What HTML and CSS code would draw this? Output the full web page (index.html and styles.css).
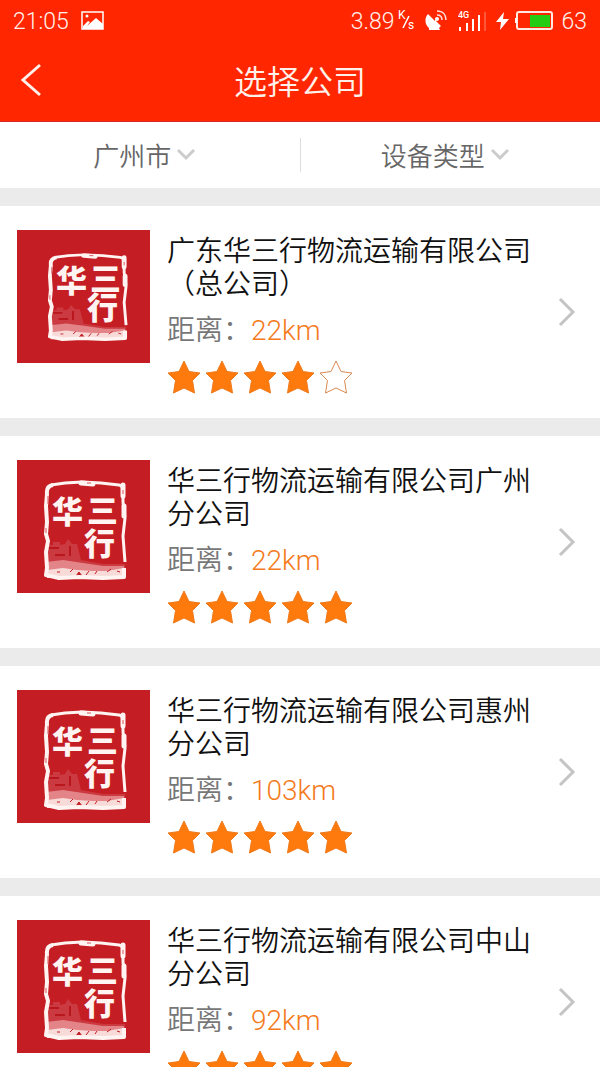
FILE: index.html
```html
<!DOCTYPE html>
<html lang="zh-CN">
  <head>
    <meta charset="UTF-8" />
    <meta name="viewport" content="width=device-width, initial-scale=1.0" />
    <title>选择公司</title>
    <link rel="stylesheet" href="styles.css">
  </head>
  <body>
    <svg class="sprite" aria-hidden="true">
      <symbol id="star" viewBox="0 0 34 34">
        <path d="M17 1 L22 11.500 L33 13 L25.500 20.500 L27.500 33 L17 28 L6.500 33 L8.500 20.500 L1 13 L12 11.500 Z" />
      </symbol>
      <symbol id="down" viewBox="0 0 20 14">
        <path d="M2 2 L10 10 L18 2" />
      </symbol>
      <symbol id="next" viewBox="0 0 18 30">
        <path d="M2 2 L15 15 L2 28" />
      </symbol>

      <!-- seal frame with the skyline -->
      <symbol id="seal" viewBox="0 0 84 100" preserveAspectRatio="none">
        <path d="M4 65 H10 V62 H17 V65 L22 64 L25 59 L29 64 L34 64 L38 80 L60 84 L82 84 V94 H4 Z" fill="#cb3a40" />
        <path d="M6 68 H16 M12 75 H22 M27 66 V76" stroke="#b9161e" stroke-width="2" />
        <path d="M3 82 L20 80 L40 83 L60 86 L81 86 V94 H3 Z" fill="#e28488" />
        <path d="M4 90 L20 88 L34 90 L50 91 L64 91 L81 88 V98 H4 Z" fill="#f8dbd8" />
        <path d="M27 92 l3 -3 M33 96 l3 -4 l3 4 Z M46 91 l-3 4 M52 94 l2 -3 M64 92 l4 -3 M74 91 l3 1 M14 92 h3" stroke="#c51d24" stroke-width="1" fill="#c51d24" />
        <path d="M8 5 L22 3 L39 2 L58 3 L76 5 Q81 6 80 12 L80 22 L82 38 L80 56 L82 82" fill="none" stroke="#fff4f1" stroke-width="3" stroke-linejoin="round" />
        <path d="M80 5 L80 16 M81 26 L81 36 M38 3 L50 4" fill="none" stroke="#fff4f1" stroke-width="5" stroke-linecap="round" />
        <path d="M10 5 Q3 6 4 14 L3 26 L4 42 L3 54 L5 61 L3 72 L4 88 L3 95 L16 98 L36 97 L60 98 L81 97 V88" fill="none" stroke="#fff4f1" stroke-width="4" stroke-linejoin="round" />
        <path d="M5 16 V24 M3 48 V53 M80 10 V14 M44 3 H48" stroke="#d8555a" stroke-width="1" />
      </symbol>
      <symbol id="logo-head" viewBox="0 0 133 133">
        <rect width="133" height="133" fill="#c51d24" />
        <use href="#seal" x="30" y="23" width="81" height="88" />
        <g class="seal-text">
          <text x="39" y="62">华</text>
          <text x="73" y="60">三</text>
          <text x="70" y="89">行</text>
        </g>
      </symbol>
      <symbol id="logo-branch" viewBox="0 0 133 133">
        <rect width="133" height="133" fill="#c51d24" />
        <use href="#seal" x="26" y="20" width="84" height="100" />
        <g class="seal-text">
          <text x="35" y="63">华</text>
          <text x="70" y="62">三</text>
          <text x="67" y="95">行</text>
        </g>
      </symbol>
    </svg>

    <div class="app">
      <header class="header">
        <div class="status">
          <span>21:05</span>
          <svg class="icon-photo" width="24" height="20" viewBox="0 0 24 20" aria-hidden="true">
            <rect x="1" y="1" width="21" height="17" fill="none" stroke="#fff" stroke-width="1.500" />
            <circle cx="6" cy="5" r="1.500" />
            <path d="M2 17 V15 L7 10 L9 11 L6 15 L15 7 L22 13 V18 H2 Z" />
          </svg>
          <div class="status-right">
            <span>3.89</span>
            <svg class="icon-speed" width="18" height="28" viewBox="0 0 18 28" aria-label="K/s">
              <text x="0" y="12">K</text>
              <path d="M11 9 L5 21" stroke="#fff" stroke-width="1.500" />
              <text x="10" y="22">s</text>
            </svg>
            <svg class="icon-dish" width="22" height="22" viewBox="0 0 22 22" aria-hidden="true">
              <path d="M3 4 C-1 8 0 15 4 18 L4 20 H15 L14 18 L16 16 L11 11 L10 11 Z" />
              <circle cx="12" cy="9" r="2" />
              <path d="M9 12 L12 9" stroke="#fff" stroke-width="1" />
              <path d="M12 5 C15 5 17 7 17 10 M12 1 C18 1 21 5 21 10" fill="none" stroke="#ffe0d6" stroke-width="1.500" />
            </svg>
            <svg class="icon-signal" width="29" height="28" viewBox="0 0 29 28" aria-label="4G">
              <text x="0" y="11">4G</text>
              <path d="M2 20 V24 M9 16 V24 M15 12 V24 M21 8 V24" stroke="#fff" stroke-width="2" />
              <path d="M27 5 V24" stroke="#ff8a70" stroke-width="1" />
            </svg>
            <svg class="icon-bolt" width="13" height="18" viewBox="0 0 13 18" aria-hidden="true">
              <path d="M8 0 L0 10 H5 L4 18 L13 7 H7 Z" />
            </svg>
            <svg class="icon-battery" width="38" height="20" viewBox="0 0 38 20" aria-hidden="true">
              <rect x="2" y="1" width="35" height="17" rx="2" fill="none" stroke="#ffe9e0" stroke-width="2" />
              <path d="M0 7 H2 V12 H0 Z" />
              <rect x="15" y="4" width="20" height="12" fill="#25cc14" />
            </svg>
            <span>63</span>
          </div>
        </div>
        <div class="navbar">
          <button class="back" type="button" aria-label="返回">
            <svg width="22" height="34" viewBox="0 0 22 34"><path d="M20 2 L3 17 L20 32" /></svg>
          </button>
          <h1>选择公司</h1>
        </div>
      </header>

      <div class="filters">
        <div class="filter">
          <select aria-label="城市">
            <option>广州市</option>
          </select>
          <svg class="down"><use href="#down" /></svg>
        </div>
        <div class="filter">
          <select aria-label="设备类型">
            <option>设备类型</option>
          </select>
          <svg class="down"><use href="#down" /></svg>
        </div>
      </div>

      <main class="list">
        <a class="company" href="#gd">
          <svg class="logo"><use href="#logo-head" /></svg>
          <div class="info">
            <h2>广东华三行物流运输有限公司（总公司）</h2>
            <p>距离：<span class="km">22km</span></p>
            <div class="stars" role="img" aria-label="4星">
              <svg><use href="#star" /></svg>
              <svg><use href="#star" /></svg>
              <svg><use href="#star" /></svg>
              <svg><use href="#star" /></svg>
              <svg class="empty"><use href="#star" /></svg>
            </div>
          </div>
          <svg class="next"><use href="#next" /></svg>
        </a>

        <a class="company" href="#gz">
          <svg class="logo"><use href="#logo-branch" /></svg>
          <div class="info">
            <h2>华三行物流运输有限公司广州分公司</h2>
            <p>距离：<span class="km">22km</span></p>
            <div class="stars" role="img" aria-label="5星">
              <svg><use href="#star" /></svg>
              <svg><use href="#star" /></svg>
              <svg><use href="#star" /></svg>
              <svg><use href="#star" /></svg>
              <svg><use href="#star" /></svg>
            </div>
          </div>
          <svg class="next"><use href="#next" /></svg>
        </a>

        <a class="company" href="#hz">
          <svg class="logo"><use href="#logo-branch" /></svg>
          <div class="info">
            <h2>华三行物流运输有限公司惠州分公司</h2>
            <p>距离：<span class="km">103km</span></p>
            <div class="stars" role="img" aria-label="5星">
              <svg><use href="#star" /></svg>
              <svg><use href="#star" /></svg>
              <svg><use href="#star" /></svg>
              <svg><use href="#star" /></svg>
              <svg><use href="#star" /></svg>
            </div>
          </div>
          <svg class="next"><use href="#next" /></svg>
        </a>

        <a class="company" href="#zs">
          <svg class="logo"><use href="#logo-branch" /></svg>
          <div class="info">
            <h2>华三行物流运输有限公司中山分公司</h2>
            <p>距离：<span class="km">92km</span></p>
            <div class="stars" role="img" aria-label="5星">
              <svg><use href="#star" /></svg>
              <svg><use href="#star" /></svg>
              <svg><use href="#star" /></svg>
              <svg><use href="#star" /></svg>
              <svg><use href="#star" /></svg>
            </div>
          </div>
          <svg class="next"><use href="#next" /></svg>
        </a>
      </main>
    </div>
  </body>
</html>
```
FILE: styles.css
```css
* {
  margin: 0;
  padding: 0;
  box-sizing: border-box;
}

body {
  background-color: #ebebeb;
  font-family: "Noto Sans CJK SC", sans-serif;
  font-weight: 350;
}

svg {
  display: block;
  flex-shrink: 0;
}

.sprite {
  display: none;
}

.app {
  height: 100vh;
  display: flex;
  flex-direction: column;
}

/* header */
.header {
  background-color: #ff2600;
  border-bottom: 1px solid #d92b20;
  color: #fff1ea;
}

.status {
  height: 42px;
  padding: 0 13px;
  display: flex;
  align-items: center;
  font-family: Roboto, sans-serif;
  font-size: 23px;
  font-weight: 300;
}

.status svg {
  fill: #fff;
}

.icon-photo {
  margin-left: 12px;
}

.status-right {
  margin-left: auto;
  display: flex;
  align-items: center;
}

.icon-speed {
  margin: 0 9px 0 4px;
  font-size: 12px;
  font-weight: 400;
}

.icon-signal {
  margin: 0 9px 0 11px;
  font-size: 9px;
  font-weight: 500;
}

.icon-battery {
  margin: 0 8px 0 6px;
}

.navbar {
  height: 79px;
  padding: 0 20px 4px;
  display: grid;
  grid-template-columns: 22px 1fr 22px;
  align-items: center;
}

.navbar h1 {
  font-size: 33px;
  font-weight: 350;
  line-height: 40px;
  text-align: center;
}

.back {
  border: none;
  background: none;
}

.back path {
  fill: none;
  stroke: #fff1ea;
  stroke-width: 3;
}

/* filters */
.filters {
  height: 66px;
  flex-shrink: 0;
  display: flex;
  align-items: center;
  background-color: #fff;
}

.filter {
  flex: 1;
  height: 34px;
  display: flex;
  align-items: center;
  justify-content: center;
  gap: 4px;
  padding-right: 10px;
}

.filter + .filter {
  border-left: 1px solid #ddd;
}

.filter select {
  appearance: none;
  border: none;
  background: none;
  color: #666;
  font: inherit;
  font-size: 26px;
  line-height: 34px;
}

.down {
  width: 20px;
  height: 14px;
  fill: none;
  stroke: #ccc;
  stroke-width: 3;
}

/* companies */
.list {
  flex: 1;
  min-height: 0;
  padding-top: 18px;
  display: flex;
  flex-direction: column;
  gap: 18px;
  overflow-y: auto;
  scrollbar-width: none;
}

.company {
  flex-shrink: 0;
  display: flex;
  align-items: center;
  padding: 24px 24px 24px 17px;
  background-color: #fff;
  color: #111;
  text-decoration: none;
}

.logo {
  width: 133px;
  height: 133px;
  align-self: flex-start;
}

.seal-text {
  fill: #fff4f1;
  font-size: 31px;
  font-weight: 900;
}

.info {
  flex: 1;
  margin: 3px 20px 0 17px;
}

.info h2 {
  font-size: 28px;
  font-weight: 350;
  line-height: 33px;
}

.info p {
  margin-top: 11px;
  color: #777;
  font-size: 28px;
  line-height: 36px;
}

.km {
  color: #f47a1c;
  font-family: Roboto, sans-serif;
}

.stars {
  margin-top: 11px;
  display: flex;
  gap: 4px;
}

.stars svg {
  width: 34px;
  height: 34px;
  fill: #ff7a0d;
  stroke: #ee7a1c;
  stroke-width: 1;
}

.stars .empty {
  fill: none;
  stroke: #d98a50;
}

.next {
  width: 18px;
  height: 30px;
  fill: none;
  stroke: #c4c4c4;
  stroke-width: 3;
}
```
